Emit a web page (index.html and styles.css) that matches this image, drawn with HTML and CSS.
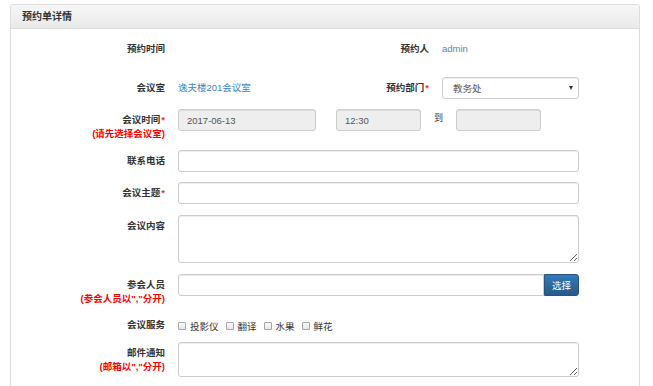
FILE: index.html
```html
<!DOCTYPE html>
<html lang="zh-CN">
<head>
    <meta charset="UTF-8">
    <title>预约单详情</title>
    <link rel="stylesheet" href="styles.css">
</head>
<body>
    <div class="panel">
        <div class="panel-heading">预约单详情</div>
        <div class="panel-body">
            <div class="row-half row-first">
                <label class="lbl">预约时间</label>
                <div class="static"></div>
                <label class="lbl">预约人</label>
                <div class="static user">admin</div>
            </div>

            <div class="row-half">
                <label class="lbl">会议室</label>
                <div class="static"><a class="link" href="#">逸夫楼201会议室</a></div>
                <label class="lbl">预约部门<span class="req">*</span></label>
                <div class="select">
                    <span>教务处</span>
                    <span class="caret"></span>
                </div>
            </div>

            <div class="form-row row-time">
                <label class="lbl">会议时间<span class="req">*</span><br><span class="hint">(请先选择会议室)</span></label>
                <div class="time-group">
                    <input class="input input-date" type="text" value="2017-06-13" disabled>
                    <input class="input input-time" type="text" value="12:30" disabled>
                    <span class="to">到</span>
                    <input class="input input-time" type="text" value="" disabled>
                </div>
            </div>

            <div class="form-row">
                <label class="lbl">联系电话</label>
                <input class="input" type="text">
            </div>

            <div class="form-row row-subject">
                <label class="lbl">会议主题<span class="req">*</span></label>
                <input class="input" type="text">
            </div>

            <div class="form-row row-content">
                <label class="lbl">会议内容</label>
                <textarea class="input textarea"></textarea>
            </div>

            <div class="form-row row-people">
                <label class="lbl">参会人员<br><span class="hint">(参会人员以","分开)</span></label>
                <div class="input-group">
                    <input class="input" type="text">
                    <button class="btn" type="button">选择</button>
                </div>
            </div>

            <div class="form-row row-service">
                <label class="lbl">会议服务</label>
                <div class="checks">
                    <label class="check"><input type="checkbox">投影仪</label>
                    <label class="check"><input type="checkbox">翻译</label>
                    <label class="check"><input type="checkbox">水果</label>
                    <label class="check"><input type="checkbox">鲜花</label>
                </div>
            </div>

            <div class="form-row">
                <label class="lbl">邮件通知<br><span class="hint">(邮箱以","分开)</span></label>
                <textarea class="input textarea textarea-mail"></textarea>
            </div>
        </div>
    </div>
</body>
</html>
```

FILE: styles.css
```css
* {
    margin: 0;
    padding: 0;
    box-sizing: border-box;
}

body {
    font-family: 'Liberation Sans', 'Noto Sans CJK SC', sans-serif;
    font-size: 9.5px;
    color: #333;
    background: #fff;
    padding: 4px 13px 0 10px;
    height: 386px;
    overflow: hidden;
}

.panel {
    border: 1px solid #ddd;
    border-radius: 3px;
    background: #fff;
    box-shadow: 0 1px 1px rgba(0,0,0,0.05);
    min-height: 400px;
}

.panel-heading {
    height: 24px;
    line-height: 23px;
    padding-left: 11px;
    font-size: 10px;
    font-weight: bold;
    color: #333;
    background: linear-gradient(to bottom, #f7f7f7 0%, #e9e9e9 100%);
    border-bottom: 1px solid #ddd;
    border-radius: 3px 3px 0 0;
}

.panel-body {
    padding-top: 9px;
}

.row-half {
    display: grid;
    grid-template-columns: 154px 138px 100px 137px;
    column-gap: 13px;
    margin-bottom: 10px;
}

.row-first {
    height: 22px;
    margin-bottom: 17px;
}

.form-row {
    display: grid;
    grid-template-columns: 154px 401px;
    column-gap: 13px;
    margin-bottom: 10px;
}

.row-time {
    margin-bottom: 9px;
}

.row-subject,
.row-content {
    margin-bottom: 11px;
}

.row-people {
    margin-bottom: 8px;
}

.row-service {
    height: 22px;
    margin-bottom: 6px;
}

.lbl {
    text-align: right;
    font-weight: bold;
    padding-top: 4px;
    line-height: 14px;
    color: #333;
}

.req {
    color: #e4393c;
    margin-left: 1px;
}

.hint {
    color: #f00;
}

.static {
    padding-top: 4px;
    line-height: 14px;
}

.user {
    color: #5b86b5;
}

.link {
    color: #3d84c6;
    text-decoration: none;
}

.select {
    height: 22px;
    border: 1px solid #ccc;
    border-radius: 3px;
    box-shadow: inset 0 1px 1px rgba(0,0,0,0.075);
    display: flex;
    align-items: center;
    justify-content: space-between;
    padding: 0 5px 0 10px;
    color: #555;
}

.caret {
    width: 0;
    height: 0;
    border-left: 2.5px solid transparent;
    border-right: 2.5px solid transparent;
    border-top: 4px solid #333;
}

.input {
    display: block;
    width: 100%;
    height: 22px;
    padding: 0 8px;
    border: 1px solid #ccc;
    border-radius: 3px;
    box-shadow: inset 0 1px 1px rgba(0,0,0,0.075);
    font-family: inherit;
    font-size: 9.5px;
    color: #555;
    background: #fff;
}

.input:disabled {
    background: #eee;
}

.time-group {
    display: flex;
    align-items: flex-start;
}

.time-group .input-date {
    width: 138px;
    margin-right: 20px;
}

.time-group .input-time {
    width: 85px;
}

.to {
    width: 35px;
    text-align: center;
    line-height: 14px;
    padding-top: 2px;
    font-size: 9px;
    color: #333;
}

.textarea {
    height: 48px;
    resize: vertical;
    padding: 4px 8px;
}

.textarea-mail {
    height: 35px;
}

.input-group {
    display: flex;
}

.input-group .input {
    flex: 1;
    border-radius: 3px 0 0 3px;
}

.btn {
    width: 35px;
    height: 22px;
    border: 1px solid #245580;
    border-radius: 0 3px 3px 0;
    background: linear-gradient(to bottom, #337ab7 0%, #265a88 100%);
    color: #fff;
    font-family: inherit;
    font-size: 9.5px;
}

.checks {
    display: flex;
    padding-top: 4px;
    line-height: 14px;
}

.check {
    display: flex;
    align-items: center;
    margin-right: 7px;
    color: #333;
}

.check input {
    appearance: none;
    width: 8px;
    height: 8px;
    margin: -2px 4px 0 0;
    border: 1px solid #a6a6a6;
    border-radius: 1px;
    background: linear-gradient(to bottom, #fafafa, #e6e6e6);
}
```
